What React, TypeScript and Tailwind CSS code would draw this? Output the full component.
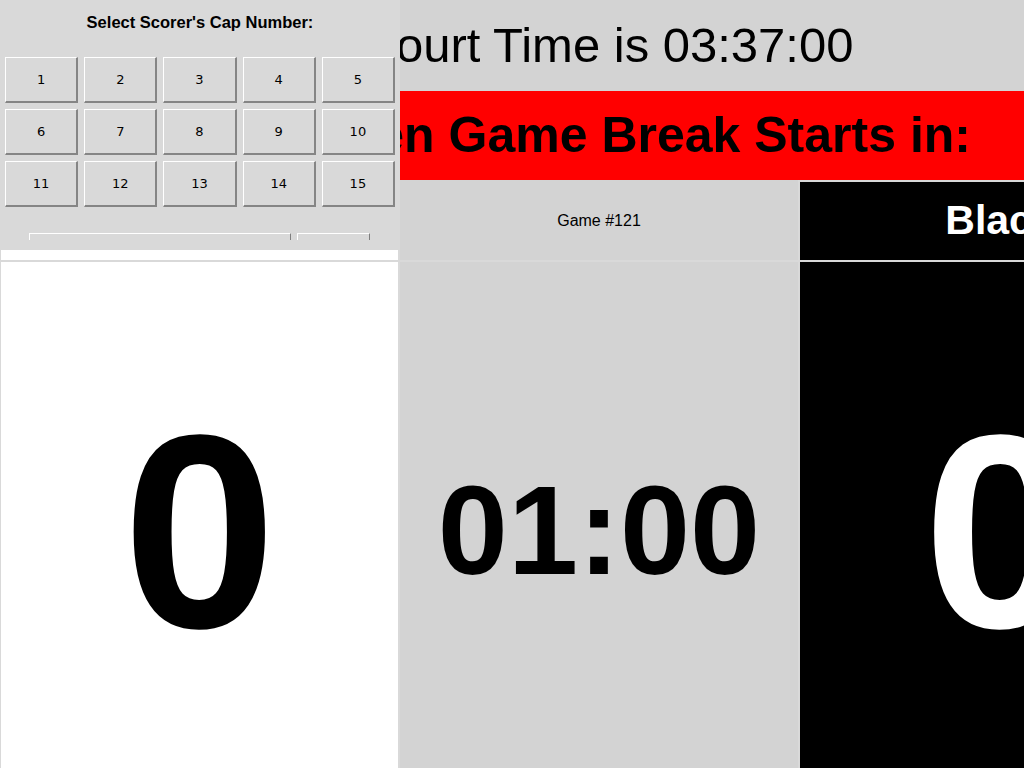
const caps = [1, 2, 3, 4, 5, 6, 7, 8, 9, 10, 11, 12, 13, 14, 15];

const CapButton = ({ n }: { n: number }) => (
  <button className="h-[46px] bg-[#d9d9d9] border-t border-l border-white border-r-2 border-b-2 border-r-[#858585] border-b-[#858585] flex items-center justify-center font-['DejaVu_Sans',sans-serif] text-[13px] text-black">
    {n}
  </button>
);

const App = () => {
  return (
    <div className="relative w-[1024px] h-[768px] overflow-hidden bg-[#d9d9d9]">
      {/* scoreboard, wider than the window */}
      <div className="w-[1200px] h-[800px] flex flex-col font-['Liberation_Sans',Arial,sans-serif] text-black">
        <div className="h-[91px] pl-[14px] bg-[#d3d3d3] flex items-center justify-center text-[49px]">
          Court Time is 03:37:00
        </div>
        <div className="h-[89px] bg-[#ff0000] flex items-center justify-center text-[50px] font-bold">
          Between Game Break Starts in:
        </div>

        <div className="grid grid-cols-[400px_400px_400px] grid-rows-[82px_538px]">
          <div className="mt-[2px] ml-[1px] mr-[2px] mb-[2px] bg-white flex items-center justify-center text-[40px] font-bold">
            White
          </div>
          <div className="mr-[2px] mb-[2px] pt-[2px] bg-[#d3d3d3] flex items-center justify-center text-[16px]">
            Game #121
          </div>
          <div className="mt-[2px] mb-[2px] bg-black text-white flex items-center justify-center text-[41px] font-bold">
            Black
          </div>

          <div className="ml-[1px] mr-[2px] bg-white flex items-center justify-center text-[276px] font-bold leading-none">
            0
          </div>
          <div className="mr-[2px] bg-[#d3d3d3] flex items-center justify-center text-[126px] font-bold leading-none">
            01:00
          </div>
          <div className="bg-black text-white flex items-center justify-center text-[276px] font-bold leading-none">
            0
          </div>
        </div>
      </div>

      {/* cap number popup */}
      <div className="absolute top-0 left-0 w-[400px] h-[250px] bg-[#d9d9d9]">
        <div className="h-[44px] flex items-center justify-center font-['Liberation_Sans',Arial,sans-serif] text-[16.5px] font-bold text-black">
          Select Scorer's Cap Number:
        </div>
        <div className="mt-[13px] px-[5px] grid grid-cols-5 gap-[6px]">
          {caps.map((n) => (
            <CapButton key={n} n={n} />
          ))}
        </div>
        <div className="h-[33px] overflow-hidden pt-[26px] pl-[29px] flex gap-[6px]">
          <div className="w-[262px] h-[30px] shrink-0 border-t border-l border-white border-r border-r-[#7f7f7f]" />
          <div className="w-[73px] h-[30px] shrink-0 border-t border-l border-white border-r border-r-[#7f7f7f]" />
        </div>
      </div>
    </div>
  );
};

export default App;
